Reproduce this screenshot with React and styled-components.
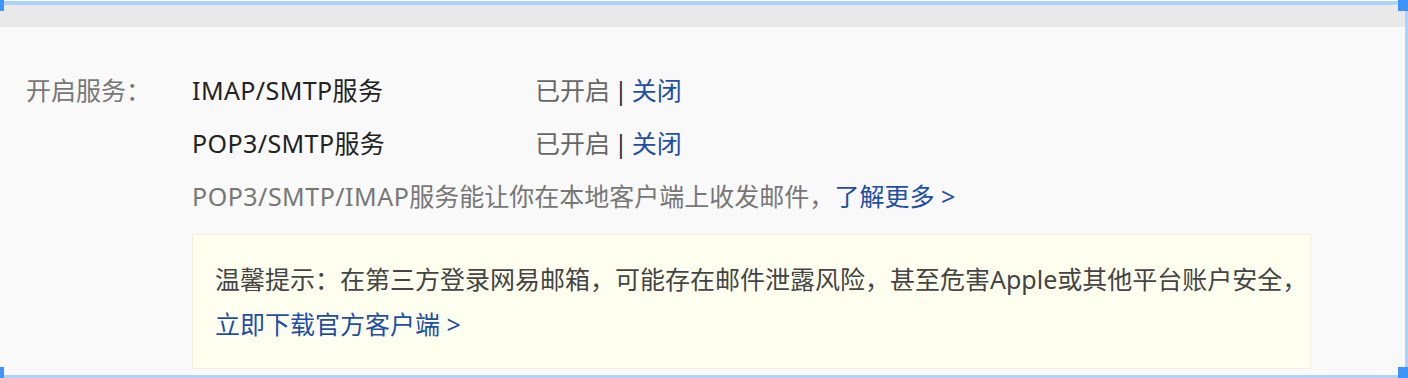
import React from 'react'
import styled, {createGlobalStyle} from 'styled-components'

const GlobalStyle = createGlobalStyle`
  html, body {
    margin: 0;
    padding: 0;
    background: #ffffff;
  }
  body {
    font-family: "Noto Sans", "Noto Sans CJK SC", sans-serif;
  }
`;

const Frame = styled.div`
  position: relative;
  box-sizing: border-box;
  width: 1408px;
  height: 378px;
  padding-top: 1px;
  overflow: hidden;
`;

const Panel = styled.div`
  box-sizing: border-box;
  height: 377px;
  border-top: 4px solid #add3fd;
  border-right: 3px solid #add3fd;
  border-bottom: 3px solid #add3fd;
  background: #f9f9f9;
  display: flex;
  flex-direction: column;
`;

const Band = styled.div`
  height: 22px;
  background: #e9e9e9;
  flex-shrink: 0;
`;

const Handle = styled.span`
  position: absolute;
  width: ${p => p.w}px;
  height: 11px;
  background: #3d94fb;
  ${p => (p.top ? 'top: 0;' : 'bottom: 0;')}
  ${p => (p.right ? 'right: 0;' : 'left: 0;')}
`;

const Content = styled.div`
  display: grid;
  grid-template-columns: 166px 1fr;
  padding: 37px 0 0 26px;
  font-size: 25px;
`;

const Label = styled.div`
  color: #777777;
  line-height: 53px;
`;

const Body = styled.div`
  display: flex;
  flex-direction: column;
`;

const ServiceRow = styled.div`
  display: grid;
  grid-template-columns: 343px auto;
  line-height: 53px;
`;

const ServiceName = styled.span`
  color: #222222;
  letter-spacing: 0.4px;
`;

const Status = styled.span`
  color: #666666;
`;

const Sep = styled.span`
  color: #333333;
  margin: 0 4px;
`;

const Link = styled.a`
  color: #1f4fa5;
  text-decoration: none;
  cursor: pointer;
`;

const Note = styled.div`
  color: #777777;
  line-height: 53px;
`;

const Latin = styled.span`
  letter-spacing: 0.5px;
`;

const Tip = styled.div`
  margin-top: 11px;
  width: 1119px;
  box-sizing: border-box;
  padding: 22px 22px 21px;
  background: #fffff0;
  border: 1px solid #efefdc;
  color: #444444;
  line-height: 45px;
`;

const TipText = styled.div`
  white-space: nowrap;
`;

const TipLink = styled(Link)`
  display: block;
`;

export default function App() {
  return (
    <>
      <GlobalStyle />
      <Frame>
        <Panel>
          <Band />
          <Content>
            <Label>开启服务：</Label>
            <Body>
              <ServiceRow>
                <ServiceName>IMAP/SMTP服务</ServiceName>
                <span>
                  <Status>已开启</Status>
                  <Sep>|</Sep>
                  <Link>关闭</Link>
                </span>
              </ServiceRow>
              <ServiceRow>
                <ServiceName>POP3/SMTP服务</ServiceName>
                <span>
                  <Status>已开启</Status>
                  <Sep>|</Sep>
                  <Link>关闭</Link>
                </span>
              </ServiceRow>
              <Note>
                <Latin>POP3/SMTP/IMAP</Latin>服务能让你在本地客户端上收发邮件，<Link>了解更多 &gt;</Link>
              </Note>
              <Tip>
                <TipText>温馨提示：在第三方登录网易邮箱，可能存在邮件泄露风险，甚至危害Apple或其他平台账户安全，</TipText>
                <TipLink>立即下载官方客户端 &gt;</TipLink>
              </Tip>
            </Body>
          </Content>
        </Panel>
        <Handle top w={4} />
        <Handle top right w={10} />
        <Handle w={4} />
        <Handle right w={10} />
      </Frame>
    </>
  )
}
